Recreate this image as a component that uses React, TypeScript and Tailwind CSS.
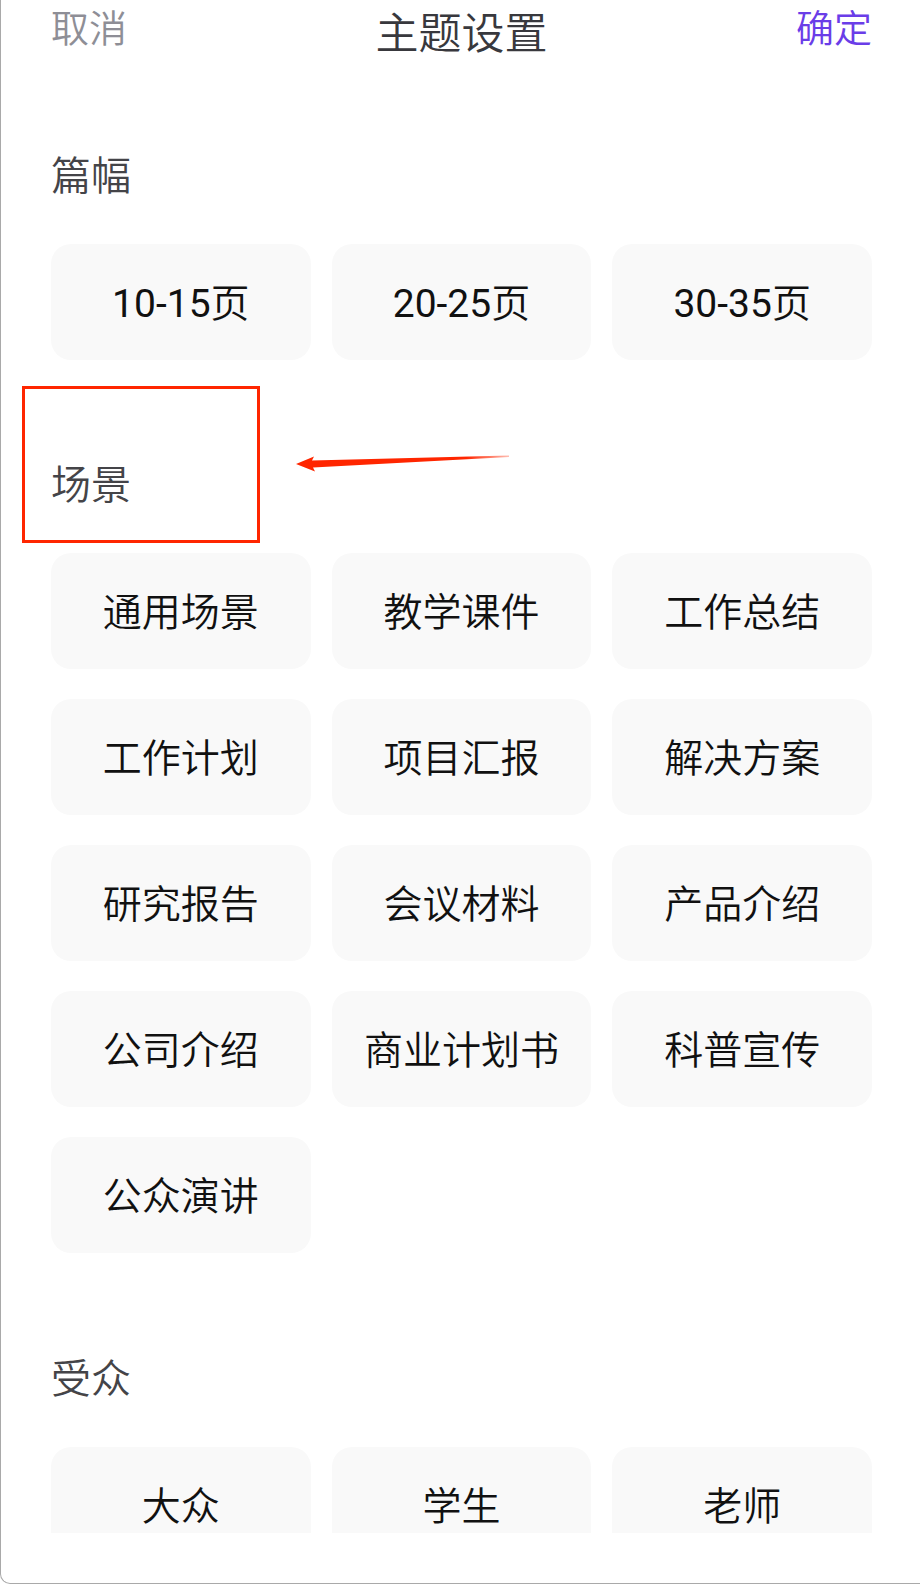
import React from 'react';

const FONT = "font-['Roboto','Noto_Sans_CJK_SC',sans-serif]";

const pageOptions = ['10-15', '20-25', '30-35'];
const sceneOptions = [
    '通用场景', '教学课件', '工作总结',
    '工作计划', '项目汇报', '解决方案',
    '研究报告', '会议材料', '产品介绍',
    '公司介绍', '商业计划书', '科普宣传',
    '公众演讲',
];
const audienceOptions = ['大众', '学生', '老师'];

const OptionButton: React.FC<{ children: React.ReactNode }> = ({ children }) => (
    <button className="h-[116px] pt-[4px] rounded-[20px] bg-[#f9f9f9] flex items-center justify-center text-[39px] leading-none font-[350] text-[#111111]">
        {children}
    </button>
);

const SectionLabel: React.FC<{ title: string, className?: string }> = ({ title, className = '' }) => (
    <div className={`h-[56px] pt-[5px] leading-[51px] text-[40px] font-[350] text-[#444448] ${className}`}>{title}</div>
);

const App: React.FC = () => {
    return (
        <div className={`relative w-[920px] h-[1584px] bg-white border-l border-b border-[#a9a9a9] rounded-bl-[10px] overflow-hidden flex flex-col ${FONT}`}>
            {/* Header */}
            <div className="h-[56px] flex-none flex items-start justify-between pl-[50px] pr-[48px]">
                <button className="mt-[10px] text-[38px] leading-[38px] font-[350] text-[#8e8e96]">取消</button>
                <div className="mt-[13px] text-[43px] leading-[43px] font-[350] text-[#38383d]">主题设置</div>
                <button className="mt-[10px] text-[38px] leading-[38px] font-[350] text-[#6a3de8]">确定</button>
            </div>

            {/* Scrollable content */}
            <div className="h-[1477px] flex-none overflow-hidden pl-[50px] pr-[48px]">
                <SectionLabel title="篇幅" className="mt-[90px]" />
                <div className="mt-[42px] grid grid-cols-3 gap-x-[21px] gap-y-[30px]">
                    {pageOptions.map(o => (
                        <OptionButton key={o}>
                            <span className="font-normal">{o}</span>页
                        </OptionButton>
                    ))}
                </div>

                <SectionLabel title="场景" className="mt-[95px]" />
                <div className="mt-[42px] grid grid-cols-3 gap-x-[21px] gap-y-[30px]">
                    {sceneOptions.map(o => <OptionButton key={o}>{o}</OptionButton>)}
                </div>

                <SectionLabel title="受众" className="mt-[96px]" />
                <div className="mt-[42px] grid grid-cols-3 gap-x-[21px] gap-y-[30px]">
                    {audienceOptions.map(o => <OptionButton key={o}>{o}</OptionButton>)}
                </div>
            </div>

            {/* Annotation overlay */}
            <div className="absolute left-[21px] top-[386px] w-[238px] h-[157px] border-[3px] border-[#ff2600]"></div>
            <svg className="absolute left-[290px] top-[450px]" width="222" height="26" viewBox="0 0 222 26">
                <defs>
                    <linearGradient id="arrowFade" x1="0" y1="0" x2="1" y2="0">
                        <stop offset="0" stopColor="#ff2600" />
                        <stop offset="0.8" stopColor="#ff2600" />
                        <stop offset="1" stopColor="#ff2600" stopOpacity="0.3" />
                    </linearGradient>
                </defs>
                <polygon
                    points="5,14 23,6.5 21,10.5 218,5.5 218,7 22,17.5 24,21.5"
                    fill="url(#arrowFade)"
                />
            </svg>
        </div>
    );
};

export default App;
